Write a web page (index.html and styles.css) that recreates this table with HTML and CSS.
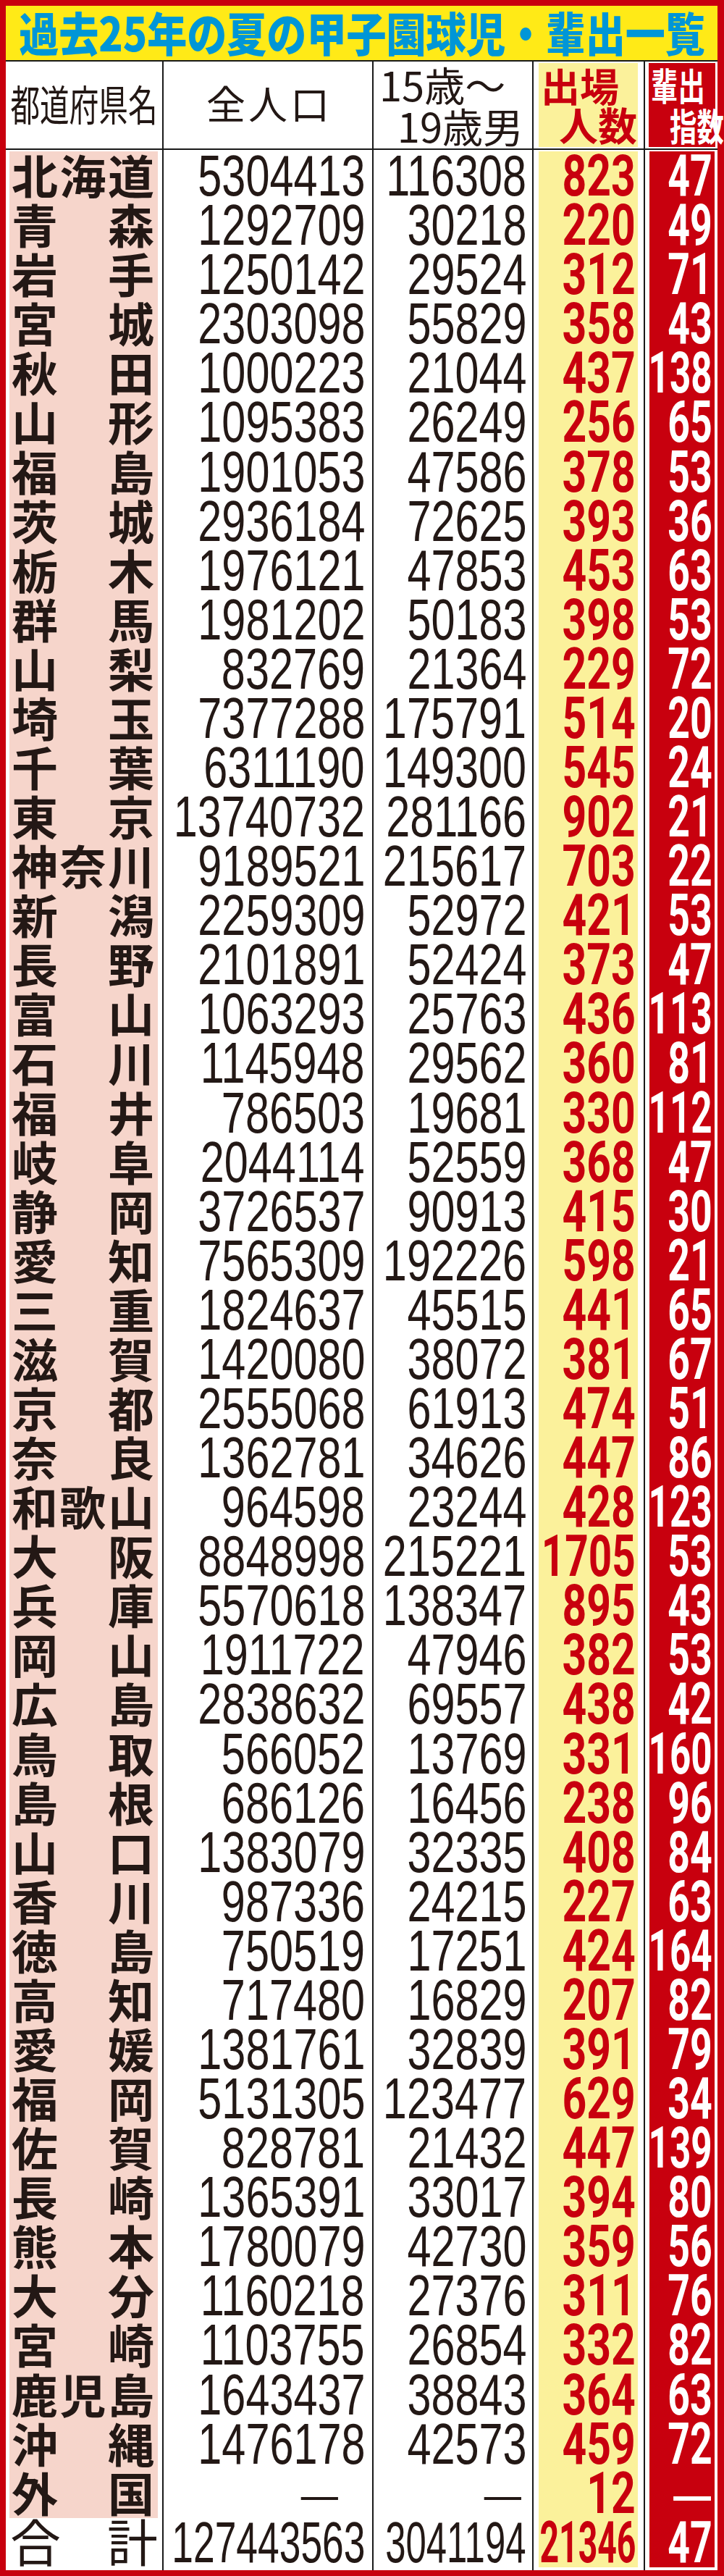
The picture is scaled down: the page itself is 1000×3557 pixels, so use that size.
FILE: index.html
```html
<!DOCTYPE html>
<html lang="ja">
<head>
<meta charset="utf-8">
<title>過去25年の夏の甲子園球児・輩出一覧</title>
<link rel="stylesheet" href="styles.css">
</head>
<body>
<div class="frame">
<div class="sheet">
<div class="title"><h1>過去25年の夏の甲子園球児・輩出一覧</h1></div>
<div class="row head">
<div class="c h-pref"><span>都道府県名</span></div>
<div class="c h-pop"><span>全人口</span></div>
<div class="c h-m15"><div class="l1">15歳～</div><div class="l2">19歳男</div></div>
<div class="c h-app"><div class="l1">出場</div><div class="l2">人数</div></div>
<div class="c h-idx"><div class="l1"><span>輩出</span></div><div class="l2"><span>指数</span></div></div>
</div>
<div class="row first"><div class="c pref"><span>北</span><span>海</span><span>道</span></div><div class="c pop"><span class="n">5304413</span></div><div class="c m15"><span class="n">116308</span></div><div class="c app"><span class="b">823</span></div><div class="c idx"><span class="b">47</span></div></div>
<div class="row"><div class="c pref"><span>青</span><span>森</span></div><div class="c pop"><span class="n">1292709</span></div><div class="c m15"><span class="n">30218</span></div><div class="c app"><span class="b">220</span></div><div class="c idx"><span class="b">49</span></div></div>
<div class="row"><div class="c pref"><span>岩</span><span>手</span></div><div class="c pop"><span class="n">1250142</span></div><div class="c m15"><span class="n">29524</span></div><div class="c app"><span class="b">312</span></div><div class="c idx"><span class="b">71</span></div></div>
<div class="row"><div class="c pref"><span>宮</span><span>城</span></div><div class="c pop"><span class="n">2303098</span></div><div class="c m15"><span class="n">55829</span></div><div class="c app"><span class="b">358</span></div><div class="c idx"><span class="b">43</span></div></div>
<div class="row"><div class="c pref"><span>秋</span><span>田</span></div><div class="c pop"><span class="n">1000223</span></div><div class="c m15"><span class="n">21044</span></div><div class="c app"><span class="b">437</span></div><div class="c idx"><span class="b w3">138</span></div></div>
<div class="row"><div class="c pref"><span>山</span><span>形</span></div><div class="c pop"><span class="n">1095383</span></div><div class="c m15"><span class="n">26249</span></div><div class="c app"><span class="b">256</span></div><div class="c idx"><span class="b">65</span></div></div>
<div class="row"><div class="c pref"><span>福</span><span>島</span></div><div class="c pop"><span class="n">1901053</span></div><div class="c m15"><span class="n">47586</span></div><div class="c app"><span class="b">378</span></div><div class="c idx"><span class="b">53</span></div></div>
<div class="row"><div class="c pref"><span>茨</span><span>城</span></div><div class="c pop"><span class="n">2936184</span></div><div class="c m15"><span class="n">72625</span></div><div class="c app"><span class="b">393</span></div><div class="c idx"><span class="b">36</span></div></div>
<div class="row"><div class="c pref"><span>栃</span><span>木</span></div><div class="c pop"><span class="n">1976121</span></div><div class="c m15"><span class="n">47853</span></div><div class="c app"><span class="b">453</span></div><div class="c idx"><span class="b">63</span></div></div>
<div class="row"><div class="c pref"><span>群</span><span>馬</span></div><div class="c pop"><span class="n">1981202</span></div><div class="c m15"><span class="n">50183</span></div><div class="c app"><span class="b">398</span></div><div class="c idx"><span class="b">53</span></div></div>
<div class="row"><div class="c pref"><span>山</span><span>梨</span></div><div class="c pop"><span class="n">832769</span></div><div class="c m15"><span class="n">21364</span></div><div class="c app"><span class="b">229</span></div><div class="c idx"><span class="b">72</span></div></div>
<div class="row"><div class="c pref"><span>埼</span><span>玉</span></div><div class="c pop"><span class="n">7377288</span></div><div class="c m15"><span class="n">175791</span></div><div class="c app"><span class="b">514</span></div><div class="c idx"><span class="b">20</span></div></div>
<div class="row"><div class="c pref"><span>千</span><span>葉</span></div><div class="c pop"><span class="n">6311190</span></div><div class="c m15"><span class="n">149300</span></div><div class="c app"><span class="b">545</span></div><div class="c idx"><span class="b">24</span></div></div>
<div class="row"><div class="c pref"><span>東</span><span>京</span></div><div class="c pop"><span class="n">13740732</span></div><div class="c m15"><span class="n">281166</span></div><div class="c app"><span class="b">902</span></div><div class="c idx"><span class="b">21</span></div></div>
<div class="row"><div class="c pref"><span>神</span><span>奈</span><span>川</span></div><div class="c pop"><span class="n">9189521</span></div><div class="c m15"><span class="n">215617</span></div><div class="c app"><span class="b">703</span></div><div class="c idx"><span class="b">22</span></div></div>
<div class="row"><div class="c pref"><span>新</span><span>潟</span></div><div class="c pop"><span class="n">2259309</span></div><div class="c m15"><span class="n">52972</span></div><div class="c app"><span class="b">421</span></div><div class="c idx"><span class="b">53</span></div></div>
<div class="row"><div class="c pref"><span>長</span><span>野</span></div><div class="c pop"><span class="n">2101891</span></div><div class="c m15"><span class="n">52424</span></div><div class="c app"><span class="b">373</span></div><div class="c idx"><span class="b">47</span></div></div>
<div class="row"><div class="c pref"><span>富</span><span>山</span></div><div class="c pop"><span class="n">1063293</span></div><div class="c m15"><span class="n">25763</span></div><div class="c app"><span class="b">436</span></div><div class="c idx"><span class="b w3">113</span></div></div>
<div class="row"><div class="c pref"><span>石</span><span>川</span></div><div class="c pop"><span class="n">1145948</span></div><div class="c m15"><span class="n">29562</span></div><div class="c app"><span class="b">360</span></div><div class="c idx"><span class="b">81</span></div></div>
<div class="row"><div class="c pref"><span>福</span><span>井</span></div><div class="c pop"><span class="n">786503</span></div><div class="c m15"><span class="n">19681</span></div><div class="c app"><span class="b">330</span></div><div class="c idx"><span class="b w3">112</span></div></div>
<div class="row"><div class="c pref"><span>岐</span><span>阜</span></div><div class="c pop"><span class="n">2044114</span></div><div class="c m15"><span class="n">52559</span></div><div class="c app"><span class="b">368</span></div><div class="c idx"><span class="b">47</span></div></div>
<div class="row"><div class="c pref"><span>静</span><span>岡</span></div><div class="c pop"><span class="n">3726537</span></div><div class="c m15"><span class="n">90913</span></div><div class="c app"><span class="b">415</span></div><div class="c idx"><span class="b">30</span></div></div>
<div class="row"><div class="c pref"><span>愛</span><span>知</span></div><div class="c pop"><span class="n">7565309</span></div><div class="c m15"><span class="n">192226</span></div><div class="c app"><span class="b">598</span></div><div class="c idx"><span class="b">21</span></div></div>
<div class="row"><div class="c pref"><span>三</span><span>重</span></div><div class="c pop"><span class="n">1824637</span></div><div class="c m15"><span class="n">45515</span></div><div class="c app"><span class="b">441</span></div><div class="c idx"><span class="b">65</span></div></div>
<div class="row"><div class="c pref"><span>滋</span><span>賀</span></div><div class="c pop"><span class="n">1420080</span></div><div class="c m15"><span class="n">38072</span></div><div class="c app"><span class="b">381</span></div><div class="c idx"><span class="b">67</span></div></div>
<div class="row"><div class="c pref"><span>京</span><span>都</span></div><div class="c pop"><span class="n">2555068</span></div><div class="c m15"><span class="n">61913</span></div><div class="c app"><span class="b">474</span></div><div class="c idx"><span class="b">51</span></div></div>
<div class="row"><div class="c pref"><span>奈</span><span>良</span></div><div class="c pop"><span class="n">1362781</span></div><div class="c m15"><span class="n">34626</span></div><div class="c app"><span class="b">447</span></div><div class="c idx"><span class="b">86</span></div></div>
<div class="row"><div class="c pref"><span>和</span><span>歌</span><span>山</span></div><div class="c pop"><span class="n">964598</span></div><div class="c m15"><span class="n">23244</span></div><div class="c app"><span class="b">428</span></div><div class="c idx"><span class="b w3">123</span></div></div>
<div class="row"><div class="c pref"><span>大</span><span>阪</span></div><div class="c pop"><span class="n">8848998</span></div><div class="c m15"><span class="n">215221</span></div><div class="c app"><span class="b w4">1705</span></div><div class="c idx"><span class="b">53</span></div></div>
<div class="row"><div class="c pref"><span>兵</span><span>庫</span></div><div class="c pop"><span class="n">5570618</span></div><div class="c m15"><span class="n">138347</span></div><div class="c app"><span class="b">895</span></div><div class="c idx"><span class="b">43</span></div></div>
<div class="row"><div class="c pref"><span>岡</span><span>山</span></div><div class="c pop"><span class="n">1911722</span></div><div class="c m15"><span class="n">47946</span></div><div class="c app"><span class="b">382</span></div><div class="c idx"><span class="b">53</span></div></div>
<div class="row"><div class="c pref"><span>広</span><span>島</span></div><div class="c pop"><span class="n">2838632</span></div><div class="c m15"><span class="n">69557</span></div><div class="c app"><span class="b">438</span></div><div class="c idx"><span class="b">42</span></div></div>
<div class="row"><div class="c pref"><span>鳥</span><span>取</span></div><div class="c pop"><span class="n">566052</span></div><div class="c m15"><span class="n">13769</span></div><div class="c app"><span class="b">331</span></div><div class="c idx"><span class="b w3">160</span></div></div>
<div class="row"><div class="c pref"><span>島</span><span>根</span></div><div class="c pop"><span class="n">686126</span></div><div class="c m15"><span class="n">16456</span></div><div class="c app"><span class="b">238</span></div><div class="c idx"><span class="b">96</span></div></div>
<div class="row"><div class="c pref"><span>山</span><span>口</span></div><div class="c pop"><span class="n">1383079</span></div><div class="c m15"><span class="n">32335</span></div><div class="c app"><span class="b">408</span></div><div class="c idx"><span class="b">84</span></div></div>
<div class="row"><div class="c pref"><span>香</span><span>川</span></div><div class="c pop"><span class="n">987336</span></div><div class="c m15"><span class="n">24215</span></div><div class="c app"><span class="b">227</span></div><div class="c idx"><span class="b">63</span></div></div>
<div class="row"><div class="c pref"><span>徳</span><span>島</span></div><div class="c pop"><span class="n">750519</span></div><div class="c m15"><span class="n">17251</span></div><div class="c app"><span class="b">424</span></div><div class="c idx"><span class="b w3">164</span></div></div>
<div class="row"><div class="c pref"><span>高</span><span>知</span></div><div class="c pop"><span class="n">717480</span></div><div class="c m15"><span class="n">16829</span></div><div class="c app"><span class="b">207</span></div><div class="c idx"><span class="b">82</span></div></div>
<div class="row"><div class="c pref"><span>愛</span><span>媛</span></div><div class="c pop"><span class="n">1381761</span></div><div class="c m15"><span class="n">32839</span></div><div class="c app"><span class="b">391</span></div><div class="c idx"><span class="b">79</span></div></div>
<div class="row"><div class="c pref"><span>福</span><span>岡</span></div><div class="c pop"><span class="n">5131305</span></div><div class="c m15"><span class="n">123477</span></div><div class="c app"><span class="b">629</span></div><div class="c idx"><span class="b">34</span></div></div>
<div class="row"><div class="c pref"><span>佐</span><span>賀</span></div><div class="c pop"><span class="n">828781</span></div><div class="c m15"><span class="n">21432</span></div><div class="c app"><span class="b">447</span></div><div class="c idx"><span class="b w3">139</span></div></div>
<div class="row"><div class="c pref"><span>長</span><span>崎</span></div><div class="c pop"><span class="n">1365391</span></div><div class="c m15"><span class="n">33017</span></div><div class="c app"><span class="b">394</span></div><div class="c idx"><span class="b">80</span></div></div>
<div class="row"><div class="c pref"><span>熊</span><span>本</span></div><div class="c pop"><span class="n">1780079</span></div><div class="c m15"><span class="n">42730</span></div><div class="c app"><span class="b">359</span></div><div class="c idx"><span class="b">56</span></div></div>
<div class="row"><div class="c pref"><span>大</span><span>分</span></div><div class="c pop"><span class="n">1160218</span></div><div class="c m15"><span class="n">27376</span></div><div class="c app"><span class="b">311</span></div><div class="c idx"><span class="b">76</span></div></div>
<div class="row"><div class="c pref"><span>宮</span><span>崎</span></div><div class="c pop"><span class="n">1103755</span></div><div class="c m15"><span class="n">26854</span></div><div class="c app"><span class="b">332</span></div><div class="c idx"><span class="b">82</span></div></div>
<div class="row"><div class="c pref"><span>鹿</span><span>児</span><span>島</span></div><div class="c pop"><span class="n">1643437</span></div><div class="c m15"><span class="n">38843</span></div><div class="c app"><span class="b">364</span></div><div class="c idx"><span class="b">63</span></div></div>
<div class="row"><div class="c pref"><span>沖</span><span>縄</span></div><div class="c pop"><span class="n">1476178</span></div><div class="c m15"><span class="n">42573</span></div><div class="c app"><span class="b">459</span></div><div class="c idx"><span class="b">72</span></div></div>
<div class="row"><div class="c pref"><span>外</span><span>国</span></div><div class="c pop"><span class="dash d-pop">—</span></div><div class="c m15"><span class="dash d-m15">—</span></div><div class="c app"><span class="b">12</span></div><div class="c idx"><span class="dash d-idx">—</span></div></div>
<div class="row last"><div class="c pref"><span>合</span><span>計</span></div><div class="c pop"><span class="n t-pop">127443563</span></div><div class="c m15"><span class="n t-m15">3041194</span></div><div class="c app"><span class="b t-app">21346</span></div><div class="c idx"><span class="b">47</span></div></div>
</div>
</div>
</body>
</html>
```
FILE: styles.css
```css
* {
  box-sizing: border-box;
  margin: 0;
  padding: 0;
}

body {
  margin: 0;
  background: #fff;
}

.frame {
  width: 1000px;
  height: 3557px;
  background: #c8000e;
  padding: 8px 9px 8px 8px;
  display: flex;
  flex-direction: column;
}

.sheet {
  flex: 1;
  background: #fff;
  display: flex;
  flex-direction: column;
}

.title {
  height: 77px;
  flex: none;
  background: #ffea17;
  border-bottom: 2px solid #1a1a1a;
  display: flex;
  align-items: center;
  justify-content: center;
}

.title h1 {
  flex: none;
  font: 900 64px/1 "Noto Sans CJK JP", sans-serif;
  color: #0096d7;
  white-space: nowrap;
  transform: scaleX(0.86);
  padding-bottom: 6px;
}

.row {
  display: grid;
  grid-template-columns: 216px 290px 221px 154px 102px;
  height: 68.08px;
  flex: none;
}

.row.first { height: 70.08px; }
.row.last { height: 72.08px; }
.row.head { height: 122px; }

.c {
  border-left: 2px solid #1a1a1a;
  display: flex;
  align-items: center;
  line-height: 1;
  white-space: nowrap;
  min-width: 0;
}

.c:first-child { border-left: 0; }

.head .c { border-bottom: 2px solid #1a1a1a; }
.first .c { padding-top: 2px; }
.last .c { padding-bottom: 4px; }

/* header */
.h-pref {
  justify-content: center;
  font: 400 58px/1 "Noto Sans CJK JP", sans-serif;
  color: #231815;
}
.h-pref span {
  display: inline-block;
  transform: scaleX(0.7);
  padding-bottom: 6px;
}

.h-pop {
  justify-content: center;
  font: 400 54px/1 "Noto Sans CJK JP", sans-serif;
  color: #231815;
  padding-left: 4px;
  letter-spacing: 4px;
}
.h-pop span { padding-bottom: 6px; }

.h-m15 {
  flex-direction: column;
  align-items: stretch;
  justify-content: flex-start;
  padding-top: 2px;
  font: 400 56px/57px "Noto Sans CJK JP", sans-serif;
  color: #231815;
}
.h-m15 .l1 { text-align: left; padding-left: 8px; }
.h-m15 .l2 { text-align: right; padding-right: 12px; }

.h-app {
  flex-direction: column;
  align-items: stretch;
  justify-content: center;
  padding: 2px 8px 2px 7px;
  background: #fbf19b content-box;
  font: 700 54px/54px "Noto Sans CJK JP", sans-serif;
  color: #c8000e;
}
.h-app .l1 { text-align: left; padding-left: 3px; }
.h-app .l2 { text-align: right; padding-right: 1px; }

.h-idx {
  flex-direction: column;
  align-items: stretch;
  justify-content: center;
  padding: 2px 3px 2px 5px;
  background: #c8000e content-box;
  font: 700 52px/56px "Noto Sans CJK JP", sans-serif;
  color: #fff;
}
.h-idx span {
  display: inline-block;
  transform: scaleX(0.72);
}
.h-idx .l1 span { transform-origin: 0 50%; margin-left: 3px; }
.h-idx .l2 { text-align: right; }
.h-idx .l2 span { transform-origin: 100% 50%; margin-right: 2px; }

/* body cells */
.pref {
  justify-content: space-between;
  padding: 0 6px 0 5px;
  background: #f6d5cb content-box;
  font: 700 64px/56px "Noto Sans CJK JP", sans-serif;
  color: #231815;
}
.pref span { padding-bottom: 6px; }
.pref span:first-child { margin-left: 3px; }
.pref span:last-child { margin-right: 5px; }

.last .pref {
  background: none;
  font-weight: 400;
  font-size: 70px;
}
.last .pref span:first-child { margin-left: 1px; }
.last .pref span:last-child { margin-right: 0; }

.pop {
  justify-content: flex-end;
  padding-right: 10px;
}
.m15 {
  justify-content: flex-end;
  padding-right: 8px;
}

.n {
  display: inline-block;
  font: 400 80px/60px "Liberation Sans", Arial, sans-serif;
  color: #231815;
  transform: scaleX(0.742);
  transform-origin: 100% 50%;
}
.n.t-pop { transform: scaleX(0.667); }
.n.t-m15 { transform: scaleX(0.636); }

.app {
  justify-content: flex-end;
  padding: 0 8px 0 7px;
  background: #fbf19b content-box;
}
.idx {
  justify-content: flex-end;
  padding: 0 4px 0 6px;
  background: #c8000e content-box;
}

.b {
  display: inline-block;
  font: 700 80px/60px Roboto, "Liberation Sans", sans-serif;
  transform-origin: 100% 50%;
  margin-right: 3px;
}
.app .b {
  color: #c8000e;
  transform: scaleX(0.735);
}
.app .b.w4 { transform: scaleX(0.707); }
.app .b.t-app { transform: scaleX(0.58); }
.idx .b {
  color: #fff;
  transform: scaleX(0.67);
}
.idx .b.w3 { transform: scaleX(0.64); }

.dash {
  display: inline-block;
  font: 400 64px/50px "Noto Sans CJK JP", sans-serif;
  color: #231815;
  padding-bottom: 6px;
}
.d-pop { margin-right: 34px; }
.d-m15 { margin-right: 4px; }
.d-idx {
  color: #fff;
  font-weight: 700;
  margin-right: 2px;
}
```
